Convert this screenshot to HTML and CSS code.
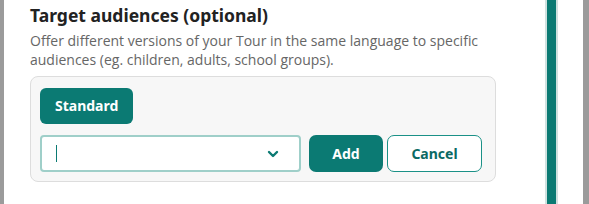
FILE: index.html
```html
<!DOCTYPE html>
<html lang="en">
<head>
  <meta charset="UTF-8">
  <title>Target audiences</title>
  <link rel="stylesheet" href="styles.css">
</head>
<body>
  <div class="modal">
    <div class="content">
      <h2>Target audiences (optional)</h2>
      <p class="hint">Offer different versions of your Tour in the same language to specific audiences (eg. children, adults, school groups).</p>

      <div class="audience-box">
        <div class="chips">
          <span class="chip">Standard</span>
        </div>
        <div class="add-row">
          <div class="select">
            <span class="caret"></span>
            <svg class="chevron" width="12" height="8" viewBox="0 0 12 8">
              <path d="M2 2 L6 6 L10 2" fill="none" stroke="#0b7a73" stroke-width="2.4" stroke-linecap="round" stroke-linejoin="round"/>
            </svg>
          </div>
          <button class="btn btn-primary">Add</button>
          <button class="btn btn-outline">Cancel</button>
        </div>
      </div>
    </div>

    <!-- scrollbar -->
    <div class="scroll-track">
      <div class="scroll-thumb"></div>
    </div>
  </div>
</body>
</html>
```

FILE: styles.css
```css
html, body {
  margin: 0;
  padding: 0;
  height: 100%;
}

body {
  background-color: #9b9b9b;
  font-family: "Open Sans", Arial, sans-serif;
  overflow: hidden;
}

.modal {
  display: flex;
  height: 204px;
  margin: 0 6px 0 4px;
  background-color: #fff;
}

.content {
  flex: 1;
  padding: 0 0 0 26px;
}

h2 {
  margin: 3px 0 0 0;
  font-family: "Noto Sans", sans-serif;
  font-size: 17.5px;
  line-height: 24px;
  font-weight: 700;
  color: #222;
}

.hint {
  margin: 4px 0 0 0;
  font-size: 14px;
  line-height: 19px;
  color: #666;
}

/* Box */
.audience-box {
  width: 446px;
  margin-top: 7px;
  padding: 11px 9px 9px 9px;
  background-color: #f7f7f7;
  border: 1px solid #ddd;
  border-radius: 8px;
}

.chips {
  display: flex;
  gap: 8px;
}

.chip {
  display: inline-block;
  padding: 0 15px;
  height: 36px;
  line-height: 36px;
  background-color: #0b7a73;
  color: #fff;
  font-family: "Noto Sans", sans-serif;
  font-weight: 700;
  font-size: 14px;
  border-radius: 6px;
}

.add-row {
  display: flex;
  align-items: center;
  gap: 4px;
  margin-top: 11px;
}

.select {
  display: flex;
  align-items: center;
  justify-content: space-between;
  box-sizing: border-box;
  width: 261px;
  height: 37px;
  margin-right: 4px;
  padding: 0 20px 0 14px;
  background-color: #fff;
  border: 2px solid #9fcfc9;
  border-radius: 4px;
}

.caret {
  width: 1px;
  height: 17px;
  background-color: #0b7a73;
}

.btn {
  box-sizing: border-box;
  height: 37px;
  font-family: "Noto Sans", sans-serif;
  font-size: 14px;
  font-weight: 700;
  border-radius: 7px;
  cursor: pointer;
}

.btn-primary {
  width: 74px;
  background-color: #0b7a73;
  border: none;
  color: #fff;
}

.btn-outline {
  width: 95px;
  background-color: #fff;
  border: 1px solid #1b9187;
  color: #0b6a64;
}

/* Scrollbar */
.scroll-track {
  width: 9px;
  margin-right: 25px;
  border-left: 2px solid #cfe1df;
  border-right: 2px solid #cfe1df;
}

.scroll-thumb {
  height: 100%;
  background-color: #0b7a73;
}
```
